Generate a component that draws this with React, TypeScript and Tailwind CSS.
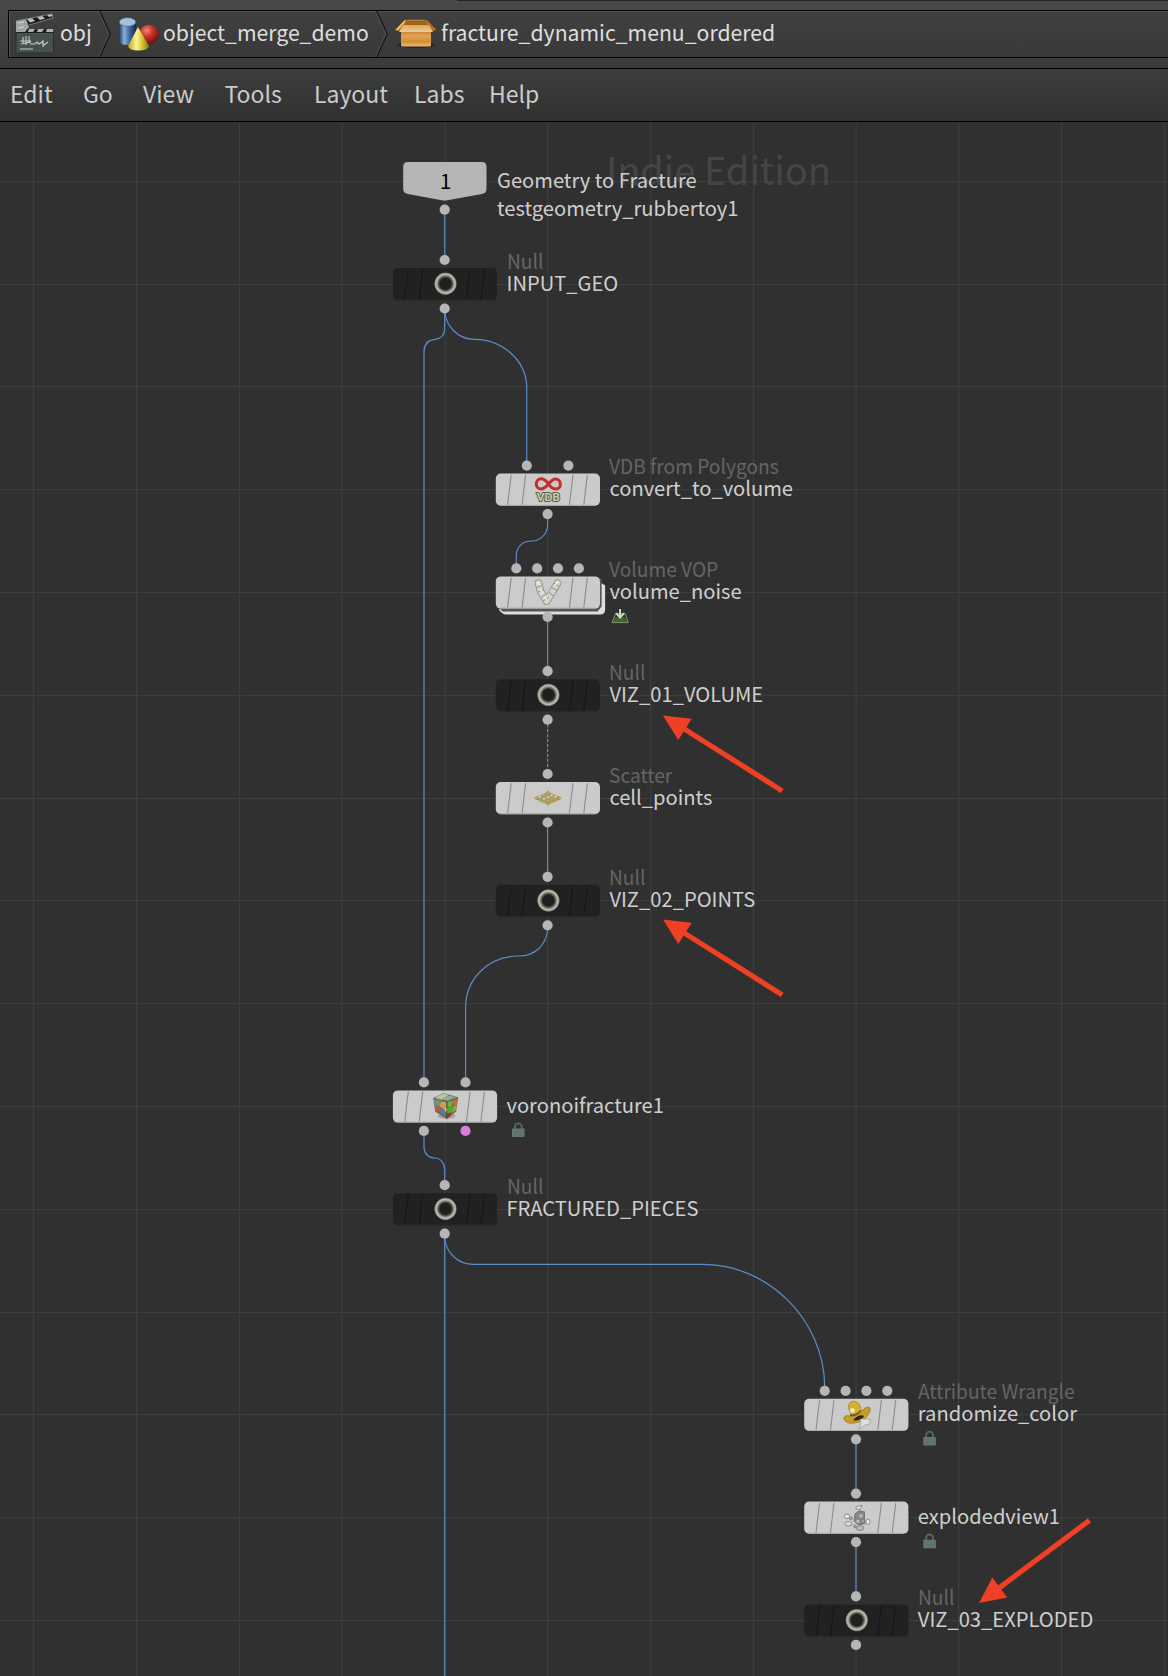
import type { ReactNode } from 'react';

const PITCH = 102.8;
const rowY = (row: number) => 284.2 + row * PITCH - 122;

const GRID_X = [33, 136, 239, 341.5, 444.5, 547, 650, 753, 855.5, 958, 1061, 1164];
const GRID_Y = Array.from({ length: 15 }, (_, i) => Math.round(rowY(i - 1) - 0.6));

const COL_A = 444.7;
const COL_B = 547.6;
const COL_C = 856;

type NodeSpec = {
  id: string;
  x: number;
  row: number;
  dark?: boolean;
  stacked?: boolean;
  type?: string;
  name: string;
  inputs: number[];
  outputs: number[];
  icon: ReactNode;
  badge?: 'lock' | 'cook';
};

const FOUR = [-31.3, -10.4, 10.4, 31.3];
const TWO = [-20.8, 20.8];

const Ring = () => (
  <g transform="translate(0.8 -0.5)">
    <circle r="8.4" fill="#1f1f1f" stroke="#43433f" strokeWidth="4.6" />
    <circle r="8.8" fill="none" stroke="#77776f" strokeWidth="3.2" />
    <circle r="9.5" fill="none" stroke="#b3b3a8" strokeWidth="2.3" />
    <circle r="10.7" fill="none" stroke="#8b8b82" strokeWidth="1" strokeDasharray="1.4 1" />
  </g>
);

const Vdb = () => (
  <g>
    <path
      d="M0.8 -6.4C-2.6 -10 -4.6 -11.2 -6.8 -11C-12.8 -10.4 -12.8 -1 -6.8 -0.8C-2.8 -0.8 -0.6 -3.8 1.4 -6.2C3.4 -8.8 5.6 -11 8.2 -10.8C14.2 -10.2 14.2 -0.9 8.4 -0.8C5.6 -0.8 3.8 -2 2.6 -3.6"
      fill="none" stroke="#c92a2a" strokeWidth="3" strokeLinecap="round"
    />
    <text x="0.6" y="10.8" textAnchor="middle" fontSize="10.8" fontWeight="900" fill="#c3d0bb" stroke="#59644f" strokeWidth="2" paintOrder="stroke" fontFamily="Lato">VDB</text>
  </g>
);

const VopV = () => (
  <g strokeLinejoin="round" strokeLinecap="round" fill="none">
    <path d="M-9 -9.5L-7 -1L-1 8.6L5 -1L10 -9.5" stroke="#85887e" strokeWidth="7.4" />
    <path d="M-9 -9.5L-7 -1L-1 8.6L5 -1L10 -9.5" stroke="#d2d5cb" strokeWidth="6" />
    <path d="M-11 -5L-6 -7M-9 -0.5L-4 -3M-6.5 4.5L-1.5 1.5M7 -9L12 -6M4 -5L9.5 -2M2 0L6 3.5M-4 8L1 5" stroke="#989c90" strokeWidth="1.1" />
    <path d="M-10 -10L-8 -8M10 -11L8 -8M-7 -3L-5 0M-3 5L-1 7" stroke="#f2f4ec" strokeWidth="1.4" />
  </g>
);

const SCATTER_DOTS = [[-11.5, 0], [-8, -1.5], [-7.5, 2], [-4, -2.8], [-3.5, 0.5], [-4, 3.5], [0.5, -5.8], [0.5, -1], [0.5, 2.5], [0.5, 5.8], [4, -3], [4.5, 0.6], [4, 3.6], [8, -1.6], [8, 1.8], [11.8, 0]];
const Scatter = () => (
  <g>
    <path d="M-11 -1L-4 -3.5L0.5 -6.5L5 -3.5L12 -1V1L5 3.5L0.5 6.5L-4 3.5L-11 1Z" fill="#a3a092" stroke="#86836f" strokeWidth="0.8" />
    {SCATTER_DOTS.map(([x, y], i) => (
      <circle key={i} cx={x} cy={y} r="1.3" fill={i % 3 === 1 ? '#ebe3b4' : '#d3b62b'} stroke="#93812f" strokeWidth="0.4" />
    ))}
  </g>
);

const Voronoi = () => (
  <g strokeWidth="0.6" strokeLinejoin="round">
    <ellipse cx="2" cy="9.5" rx="9" ry="2.6" fill="#a2a2a2" />
    <path d="M-11 -8.5L-1 -13L13 -9L11 5L2 12L-9 5Z" fill="#64705f" stroke="#4b5248" />
    <path d="M-11 -8.5L-1 -13L4 -11.5L-4 -6Z" fill="#b8c79a" />
    <path d="M3 -11.4L13 -9L3 -5.5L-3 -7Z" fill="#94a89a" />
    <path d="M-10.5 -7.5L-4 -5.5L-5 0L-10 -1Z" fill="#719382" />
    <path d="M-10 0L-5 0L-4 6.5L-9 4Z" fill="#bb5a42" />
    <path d="M-4 -5L1 -5L2 -2L0 3L-5 0Z" fill="#d59c50" />
    <path d="M-4 1L0 3L1 10L-4 7Z" fill="#587aa2" />
    <path d="M3 -5L8 -6L7 0L3 1Z" fill="#6ab23c" />
    <path d="M8 -6.5L12.5 -8L12 -2L8 -1Z" fill="#bf6f37" />
    <path d="M3 2L7 0L11 1L7 7L2 8Z" fill="#58a829" />
    <path d="M2 7L7 6L5 10L2 12Z" fill="#a82f31" />
    <path d="M0 1L3 2L2 5L0 5Z" fill="#e1d13c" />
    <path d="M9 0L12 -2L11 4L8 6Z" fill="#a99d36" />
    <path d="M-11 -8.5L2 -5L13 -9M2 -5L2 12" fill="none" stroke="#3d4739" />
  </g>
);

const Cowboy = () => (
  <g strokeWidth="0.6">
    <path d="M-12 4C-13 1 -9 0 -6 1C0 0 6 -3 9 -7C12 -9 15 -8 14 -4C12 2 6 7 -2 8C-7 9 -11 7 -12 4Z" fill="#c89c27" stroke="#84631b" />
    <path d="M-5 1C-5 -3 -9 -6 -7 -11C-5 -14.5 -1 -14.5 2 -12C5 -9.5 4 -7 6 -5C2 0 -2 2 -5 1Z" fill="#d7b02d" stroke="#94721c" />
    <path d="M-6 -1C-2 0 2 -2 4 -5L5 -4C2 1 -3 2 -6 1Z" fill="#6c5b30" />
    <path d="M-3 5.5C0 1 5 -1 8 1C6 5 1 6 -3 5.5Z" fill="#2f210d" />
    <circle cx="-3.5" cy="-4.5" r="2.4" fill="#f0e6ae" />
    <path d="M4 4H14V9L9 10L2.5 14L5 9Z" fill="#dde3d6" stroke="#8b9686" />
  </g>
);

const Exploded = () => (
  <g stroke="#777" strokeWidth="0.8" fill="#aeb0ae">
    <path d="M0 -11L6 -12.5L4 -8L0 -9Z" fill="#e6e8e4" />
    <path d="M-1 -4L3 -7L8.5 -6L8.5 0L9 6L2 7L-2 3Z" fill="#858887" stroke="#666" />
    <circle cx="5" cy="-2" r="2.6" fill="#adb0af" />
    <circle cx="2" cy="3.5" r="2.2" fill="#bcbebc" />
    <circle cx="7" cy="3.5" r="1.8" fill="#a3a6a4" />
    <ellipse cx="-9" cy="-1.5" rx="2.7" ry="2.2" fill="#e8eae8" />
    <circle cx="-5" cy="0.5" r="1.5" />
    <ellipse cx="-7.5" cy="6" rx="3.6" ry="2.2" fill="#dadcda" />
    <ellipse cx="12" cy="4" rx="2" ry="2.8" fill="#e8eae8" />
    <ellipse cx="4" cy="10.3" rx="4" ry="2.4" fill="#b9bbb9" />
    <circle cx="-1" cy="8.6" r="1.4" />
  </g>
);

const NODES: NodeSpec[] = [
  { id: 'in', x: COL_A, row: 0, dark: true, type: 'Null', name: 'INPUT_GEO', inputs: [0], outputs: [0], icon: <Ring /> },
  { id: 'vdb', x: COL_B, row: 2, type: 'VDB from Polygons', name: 'convert_to_volume', inputs: TWO, outputs: [0], icon: <Vdb /> },
  { id: 'vop', x: COL_B, row: 3, stacked: true, type: 'Volume VOP', name: 'volume_noise', inputs: FOUR, outputs: [0], icon: <VopV />, badge: 'cook' },
  { id: 'v1', x: COL_B, row: 4, dark: true, type: 'Null', name: 'VIZ_01_VOLUME', inputs: [0], outputs: [0], icon: <Ring /> },
  { id: 'sc', x: COL_B, row: 5, type: 'Scatter', name: 'cell_points', inputs: [0], outputs: [0], icon: <Scatter /> },
  { id: 'v2', x: COL_B, row: 6, dark: true, type: 'Null', name: 'VIZ_02_POINTS', inputs: [0], outputs: [0], icon: <Ring /> },
  { id: 'vor', x: COL_A, row: 8, name: 'voronoifracture1', inputs: TWO, outputs: TWO, icon: <Voronoi />, badge: 'lock' },
  { id: 'fr', x: COL_A, row: 9, dark: true, type: 'Null', name: 'FRACTURED_PIECES', inputs: [0], outputs: [0], icon: <Ring /> },
  { id: 'rnd', x: COL_C, row: 11, type: 'Attribute Wrangle', name: 'randomize_color', inputs: FOUR, outputs: [0], icon: <Cowboy />, badge: 'lock' },
  { id: 'exp', x: COL_C, row: 12, name: 'explodedview1', inputs: [0], outputs: [0], icon: <Exploded />, badge: 'lock' },
  { id: 'v3', x: COL_C, row: 13, dark: true, type: 'Null', name: 'VIZ_03_EXPLODED', inputs: [0], outputs: [0], icon: <Ring /> },
];

const Lock = () => (
  <g transform="translate(67 15.6)">
    <path d="M3.2 7V4.5a3.4 3.4 0 0 1 6.8 0V7" fill="none" stroke="#566a5d" strokeWidth="1.8" />
    <rect x="0.3" y="6.3" width="12.6" height="8.6" rx="0.8" fill="#66796d" />
    <path d="M1.5 8.5H12M1.5 10.7H12M1.5 12.9H12" stroke="#5b6e6b" strokeWidth="0.8" />
  </g>
);

const Cook = () => (
  <g transform="translate(64 16)">
    <path d="M4 5H13.5L16.8 14H0.5Z" fill="#26331a" stroke="#a0ab92" strokeWidth="0.8" />
    <path d="M1.4 13.3Q3 8 6 8.5L8.5 10.5L11 8.5Q14 8 15.8 13.3Z" fill="#3f6a25" />
    <path d="M8.5 0.3V8M4.5 4.5L8.5 9L12.5 4.5" fill="none" stroke="#d3dfc4" strokeWidth="1.9" />
  </g>
);

function NodeShape({ node }: { node: NodeSpec }) {
  const { dark } = node;
  return (
    <g transform={`translate(${node.x} ${rowY(node.row)})`}>
      {node.stacked && (
        <>
          <path d="M53 -10L57.5 -7V17Q57.5 22 52.5 22H-42Q-45 22 -49 17Z" fill="#dedede" />
          <path d="M50 -14H54V14L50 18.8H-45L-50 14Z" fill="#555" />
        </>
      )}
      <rect x="-51.8" y="-16.2" width="104.2" height="32.2" rx="5" fill={dark ? '#212121' : '#cbcbcb'} />
      <path d="M-48 15.5H48" stroke={dark ? '#292929' : '#aaa'} strokeWidth="1" />
      <path d="M-36.4 -15L-40 15M-22 -15L-25.5 15M25.4 -15L21.8 15M39.8 -15L36.2 15" stroke={dark ? '#161616' : '#8b8b8b'} strokeWidth="1.1" />
      {node.icon}
      {node.inputs.map((dx) => <circle key={dx} cx={dx} cy="-24.2" r="5.1" fill="#b6b6b6" />)}
      {node.outputs.map((dx, i) => <circle key={dx} cx={dx} cy="24.3" r="5.1" fill={i === 1 ? '#da7edb' : '#b6b6b6'} />)}
      {node.badge === 'lock' && <Lock />}
      {node.badge === 'cook' && <Cook />}
    </g>
  );
}

function Arrow({ x, y, angle, length }: { x: number; y: number; angle: number; length: number }) {
  return (
    <g transform={`translate(${x} ${y}) rotate(${angle})`} fill="#ef4026">
      <path d="M0 0L26 -12.5V12.5Z" />
      <rect x="24" y="-2.6" width={length - 24} height="5.2" />
    </g>
  );
}

function NodeLabel({ node }: { node: NodeSpec }) {
  return (
    <div
      className="absolute flex h-[44px] flex-col justify-end whitespace-nowrap text-[20.15px] leading-[22px]"
      style={{ left: node.x + 61.8, top: Math.ceil(rowY(node.row) - 35.1) }}
    >
      {node.type && <span className="origin-left scale-x-[0.952] text-[#656565]">{node.type}</span>}
      <span className="text-[#cfcfcf]">{node.name}</span>
    </div>
  );
}

const WIRES = [
  'M444.7 214V256',
  'M444.7 312V328Q444.7 338.5 435 339.3C427 340 424 345 424 352V1078',
  'M444.7 312C446 325 457 339.3 474 339.3C503 339.3 526.7 361 526.7 388V461',
  'M547.6 518V525C547.6 534 540 541 532 541C522 541 516.3 547 516.3 556V564',
  'M547.6 621V667',
  'M547.6 827V873',
  'M547.6 930C546 946 534 956 519 956C489 956 465.6 978 465.6 1008V1078',
  'M424 1135V1147C424 1153 428 1158 434.5 1158C440.5 1158 444.7 1163 444.7 1170V1181',
  'M444.7 1238V1676',
  'M444.7 1238C446 1252 457 1264.4 474 1264.4H703C768 1264.4 824 1320 824.7 1386',
  'M856 1443V1490',
  'M856 1546V1592',
];

const ClapperIcon = () => (
  <svg width="40" height="42" viewBox="0 0 40 42" className="block shrink-0">
    <rect x="1" y="19" width="37.5" height="21" rx="1" fill="#46504d" stroke="#25302e" />
    <path d="M1 8L37 0.5L38 5L13 12.5L12 16H38V20H1Z" fill="#1e1e1e" />
    <path d="M12 6L17 5L20 8L15 9.5ZM22 4L27 2.8L30 5.5L25 7ZM32 2L37 1L37.5 3L34 4Z" fill="#bcc3bf" />
    <path d="M14 16H20L18 19H13ZM23 16H29L27 19H22ZM32 16H38V19H31Z" fill="#aab3ae" />
    <path d="M1 8L11 6L14 14L10 19H1Z" fill="#9ea6a4" />
    <path d="M3 10L9 9M3 15L9 14" stroke="#d5dbd8" />
    <path d="M5 28H16M8 24V31M11 23V32M6 31L16 29M14 23V30M15 31H20L22 29L24 31L27 29L29 32L33 29M28 27V34M5 36H18" stroke="#c6cfcb" strokeWidth="1.1" fill="none" />
    <path d="M1 8L37 0.8L38 5L14 12" stroke="#87908c" strokeWidth="0.8" fill="none" />
  </svg>
);

const ShapesIcon = () => (
  <svg width="42" height="36" viewBox="0 0 42 36" className="block shrink-0">
    <defs>
      <linearGradient id="cyl" x1="0" x2="1"><stop offset="0" stopColor="#17365f" /><stop offset="0.3" stopColor="#8cb0d9" /><stop offset="0.65" stopColor="#356399" /><stop offset="1" stopColor="#122c50" /></linearGradient>
      <linearGradient id="cone" x1="0" x2="1"><stop offset="0" stopColor="#b9a11d" /><stop offset="0.4" stopColor="#fff78c" /><stop offset="0.65" stopColor="#dcc93b" /><stop offset="1" stopColor="#8a7512" /></linearGradient>
      <radialGradient id="ball" cx="0.38" cy="0.3" r="0.7"><stop offset="0" stopColor="#ee8a76" /><stop offset="0.45" stopColor="#ca3426" /><stop offset="1" stopColor="#6d110c" /></radialGradient>
    </defs>
    <path d="M1 6V24Q1 29 9.5 29T18 24V6Z" fill="url(#cyl)" />
    <ellipse cx="9.5" cy="6" rx="8.3" ry="4.3" fill="#a9c0da" stroke="#3a6191" strokeWidth="0.7" />
    <circle cx="31" cy="18.5" r="9.8" fill="url(#ball)" />
    <path d="M20 11L31 30Q30 34.5 20.5 34.5T10 30Z" fill="url(#cone)" />
  </svg>
);

const BoxIcon = () => (
  <svg width="42" height="30" viewBox="0 0 42 30" className="block shrink-0">
    <defs>
      <linearGradient id="box" x1="0" x2="0" y1="0" y2="1"><stop offset="0" stopColor="#bc7a2a" /><stop offset="0.35" stopColor="#e3a453" /><stop offset="0.7" stopColor="#d08e37" /><stop offset="1" stopColor="#eab76c" /></linearGradient>
      <linearGradient id="flap" x1="0" x2="0" y1="0" y2="1"><stop offset="0" stopColor="#d9a866" /><stop offset="1" stopColor="#f0cb93" /></linearGradient>
    </defs>
    <ellipse cx="21" cy="26" rx="19" ry="3.2" fill="#292725" />
    <path d="M6 11H36V26Q36 27.5 34 27.5H8Q6 27.5 6 26Z" fill="url(#box)" />
    <path d="M10 1H32L34 7H7Z" fill="#9a6419" />
    <path d="M10 1L0.5 11L4 12L11 5ZM32 1L41.5 11L37 12L31 4Z" fill="#ba6f1b" />
    <path d="M10 1L0.5 11L3 11L10 3ZM12 1.2H30" fill="#ecd2a0" stroke="#d99b46" strokeWidth="0.7" />
    <path d="M8 6H34L38 13H4Z" fill="url(#flap)" />
  </svg>
);

const Chevron = () => (
  <svg width="14" height="46" viewBox="0 0 14 46" className="block shrink-0">
    <path d="M0.5 0L11 23L0.5 46" fill="none" stroke="#565656" />
    <path d="M1.7 0L12.3 23L1.7 46" fill="none" stroke="#151515" strokeWidth="1.2" />
  </svg>
);

const MENU: [string, string][] = [
  ['Edit', 'w-[73px]'], ['Go', 'w-[60px]'], ['View', 'w-[81.5px]'], ['Tools', 'w-[89.5px]'],
  ['Layout', 'w-[100px]'], ['Labs', 'w-[75px]'], ['Help', 'w-[60px]'],
];

export default function App() {
  return (
    <div className="flex h-[1676px] w-[1168px] flex-col overflow-hidden bg-[#303030] font-['Noto_Sans_CJK_SC',sans-serif]">
      <header className="relative h-[68px] shrink-0 bg-linear-to-b from-[#4a4a4a] to-[#3a3a3a] pl-2 pt-[10px]">
        <div className="absolute right-0 top-0 h-px w-[711px] bg-[#252525]" />
        <nav className="flex h-12 items-center border-y border-l border-black bg-linear-to-b from-[#404040] to-[#393939] text-[21.2px] leading-[30px] text-[#dedede] shadow-[inset_1px_1px_0_#555]">
          <div className="flex w-[89px] items-center pl-[6px]">
            <ClapperIcon />
            <span className="mb-[5px] ml-[5px]">obj</span>
          </div>
          <Chevron />
          <div className="flex w-[263px] items-center pl-[6px]">
            <ShapesIcon />
            <span className="mb-[5px] ml-[3px]">object_merge_demo</span>
          </div>
          <Chevron />
          <div className="flex items-center pl-[6px]">
            <BoxIcon />
            <span className="mb-[5px] ml-[4px]">fracture_dynamic_menu_ordered</span>
          </div>
        </nav>
      </header>
      <nav className="flex h-[54px] shrink-0 items-center border-y border-black bg-linear-to-b from-[#3d3d3d] to-[#303030] pb-[4px] pl-[10px] text-[23px] leading-[32px] text-[#cbcbcb]">
        {MENU.map(([label, width]) => (
          <span key={label} className={`${width} shrink-0 whitespace-nowrap`}>{label}</span>
        ))}
      </nav>
      <main className="relative h-[1554px] shrink-0 overflow-hidden">
        <svg width="1168" height="1554" className="absolute inset-0 block">
          {GRID_X.map((x) => <rect key={x} x={x} y="1" width="1.2" height="1553" fill="#3d3d3d" />)}
          {GRID_Y.map((y) => <rect key={y} x="0" y={y} width="1168" height="1.2" fill="#3d3d3d" />)}
        </svg>
        <div className="absolute left-[606px] top-[19px] whitespace-nowrap text-[38px] leading-[56px] text-[#454545]">Indie Edition</div>
        <svg width="1168" height="1554" className="absolute inset-0 block">
          <g transform="translate(0 -122)" fill="none" stroke="#5a8dc9" strokeWidth="1.2">
            {WIRES.map((d) => <path key={d} d={d} />)}
            <path d="M547.6 724V770" strokeDasharray="3 2" />
          </g>
          <g transform="translate(0 -122)">
            <path d="M408 162H482Q486.5 162 486.5 167V189Q486.5 193 482 194L446 200.5H443L408 194Q403.2 193 403.2 189V167Q403.2 162 408 162Z" fill="#b6b6b6" />
            <circle cx={COL_A} cy="209.7" r="5.1" fill="#b6b6b6" />
          </g>
          {NODES.map((n) => <NodeShape key={n.id} node={n} />)}
        </svg>
        <div className="absolute left-[404px] top-[43px] w-[83px] text-center text-[21px] leading-[30px] text-black">1</div>
        <div className="absolute left-[497px] top-[44px] whitespace-nowrap text-[20.15px] leading-[28px] text-[#cfcfcf]">
          <div>Geometry to Fracture</div>
          <div>testgeometry_rubbertoy1</div>
        </div>
        {NODES.map((n) => <NodeLabel key={n.id} node={n} />)}
        <svg width="1168" height="1554" className="absolute inset-0 block">
          <g transform="translate(0 -122)">
            <Arrow x={663} y={715.5} angle={32.3} length={141} />
            <Arrow x={663} y={919.5} angle={32.3} length={141} />
            <Arrow x={979} y={1603} angle={-36.8} length={138} />
          </g>
        </svg>
      </main>
    </div>
  );
}
